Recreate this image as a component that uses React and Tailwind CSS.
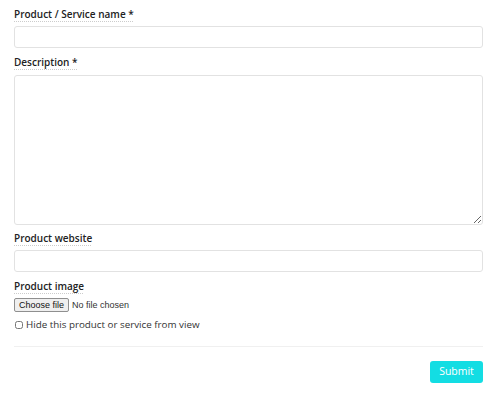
import React, { useState } from 'react';

const font = { fontFamily: '"Open Sans", "Liberation Sans", sans-serif' };
const sysFont = { fontFamily: '"Liberation Sans", Arial, sans-serif' };

const Label = ({ children, className = '' }) => (
  <label
    className={`block h-4 text-[10px] leading-4 font-semibold text-[#222] underline decoration-dotted decoration-[#ccc] underline-offset-[3px] ${className}`}
  >
    {children}
  </label>
);

const App = () => {
  // form state
  const [name, setName] = useState('');
  const [description, setDescription] = useState('');
  const [website, setWebsite] = useState('');
  const [hidden, setHidden] = useState(false);
  const [file, setFile] = useState(null);

  return (
    <div className="w-[500px] h-[399px] bg-white" style={font}>
      <form
        className="w-[469px] ml-[14px] pt-[6px] flex flex-col"
        onSubmit={(e) => e.preventDefault()}
      >
        {/* name */}
        <Label className="mb-1">Product / Service name *</Label>
        <input
          className="h-[22px] w-full border border-[#e2e2e2] rounded-[3px] px-2 text-xs outline-none"
          type="text"
          value={name}
          onChange={(e) => setName(e.target.value)}
        />

        {/* description */}
        <Label className="mt-[6px] mb-[5px]">Description *</Label>
        <textarea
          className="h-[150px] w-full border border-[#e2e2e2] rounded-[3px] px-2 py-1 text-xs outline-none resize-y block"
          value={description}
          onChange={(e) => setDescription(e.target.value)}
        />

        {/* website */}
        <Label className="mt-[5px] mb-1">Product website</Label>
        <input
          className="h-[22px] w-full border border-[#e2e2e2] rounded-[3px] px-2 text-xs outline-none"
          type="text"
          value={website}
          onChange={(e) => setWebsite(e.target.value)}
        />

        {/* image */}
        <Label className="mt-[6px] mb-1">Product image</Label>
        <label
          className="h-[14px] flex items-center gap-[3px] text-[9px] leading-none text-[#333] whitespace-nowrap cursor-pointer"
          style={sysFont}
        >
          <span className="h-[14px] shrink-0 px-[4px] flex items-center border border-[#8f8f8f] bg-[#efefef] rounded-[2px] text-[#111]">
            Choose file
          </span>
          <span>{file ? file.name : 'No file chosen'}</span>
          <input
            className="hidden"
            type="file"
            accept="image/*"
            onChange={(e) => setFile(e.target.files[0])}
          />
        </label>

        {/* hide */}
        <label className="mt-[6px] h-[14px] flex items-center gap-[3px] text-[9.8px] text-[#333]">
          <input
            className="w-[8px] h-[8px] m-0 ml-px"
            type="checkbox"
            checked={hidden}
            onChange={(e) => setHidden(e.target.checked)}
          />
          Hide this product or service from view
        </label>

        <div className="mt-[14px] border-t border-[#f0f0f0]" />

        <div className="mt-[14px] flex justify-end">
          <button
            className="h-[22px] w-[53px] rounded-[3px] bg-[#13dde3] text-white text-[10.5px] font-medium"
            type="submit"
          >
            Submit
          </button>
        </div>
      </form>
    </div>
  );
};

export default App;
